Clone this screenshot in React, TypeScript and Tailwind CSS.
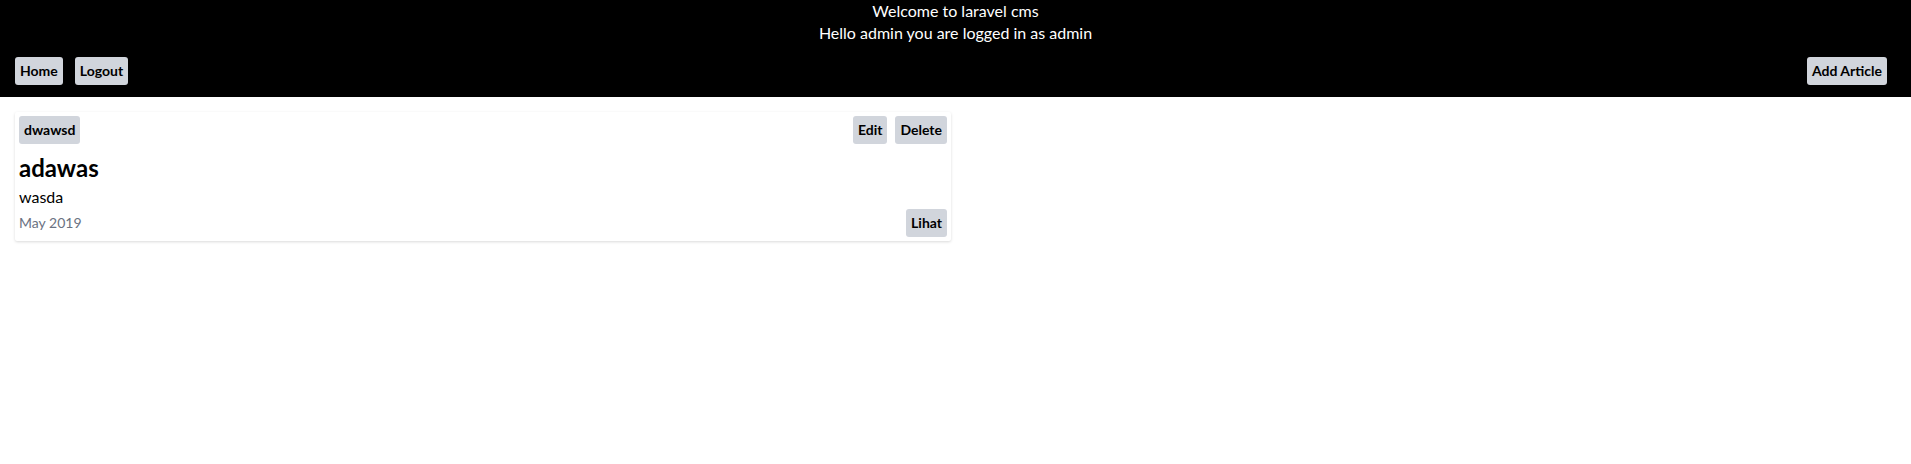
import React from 'react';

const btn = 'bg-gray-300 text-black font-bold text-sm leading-5 px-[5px] py-1 rounded-[3px]';

const App: React.FC = () => {
  return (
    <div className="min-h-screen bg-white font-['Lato',sans-serif]">
      <header className="bg-black text-white pb-3">
        <div className="text-center text-base leading-[22px]">
          <div>Welcome to laravel cms</div>
          <div>Hello admin you are logged in as admin</div>
        </div>
        <div className="flex items-center justify-between mt-[13px] pl-[15px] pr-6">
          <div className="flex gap-3">
            <button className={btn}>Home</button>
            <button className={btn}>Logout</button>
          </div>
          <button className={btn}>Add Article</button>
        </div>
      </header>

      <main className="pt-[15px] pl-[15px]">
        <div className="w-[936px] bg-white shadow-[0_1px_3px_rgba(0,0,0,0.15)] rounded-[2px] p-1">
          <div className="flex items-start justify-between">
            <span className={btn}>dwawsd</span>
            <div className="flex gap-2">
              <button className={btn}>Edit</button>
              <button className={btn}>Delete</button>
            </div>
          </div>
          <h2 className="text-2xl font-bold leading-8 mt-2">adawas</h2>
          <p className="text-base leading-[25px]">wasda</p>
          <div className="flex items-center justify-between">
            <span className="text-sm text-gray-500 leading-5">May 2019</span>
            <button className={btn}>Lihat</button>
          </div>
        </div>
      </main>
    </div>
  );
};

export default App;
